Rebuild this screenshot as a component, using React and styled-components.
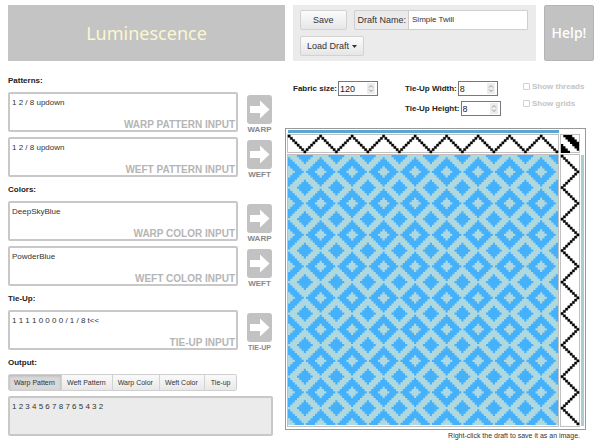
import React, { useState } from "react";
import styled, { createGlobalStyle } from "styled-components";

const GlobalStyle = createGlobalStyle`
  * { box-sizing: border-box; }
  body {
    margin: 0;
    background: #fff;
    color: #333;
    font-family: "Liberation Sans", Arial, Helvetica, sans-serif;
    font-size: 8px;
    line-height: 10px;
  }
  button, input, textarea { font: inherit; color: inherit; margin: 0; }
`;

const Page = styled.div`
  padding: 5px 6px 0 8px;
`;

const Header = styled.header`
  display: grid;
  grid-template-columns: minmax(0, 277fr) minmax(0, 243fr) 50px;
  gap: 8px;
`;

const Brand = styled.h1`
  margin: 0;
  display: flex;
  align-items: center;
  justify-content: center;
  background: #c4c4c4;
  color: #fbf7d0;
  font: 400 18px/24px "Noto Sans", "Open Sans", sans-serif;
`;

const Toolbar = styled.div`
  background: #ebebeb;
  padding: 5px 8px 5px 7px;
  display: flex;
  flex-direction: column;
  align-items: flex-start;
  gap: 6px;
`;

const ToolRow = styled.div`
  display: flex;
  align-self: stretch;
  gap: 7px;
`;

const Button = styled.button`
  height: 20px;
  padding: 0 12px;
  border: 1px solid #d2d2d2;
  border-radius: 2px;
  background: linear-gradient(#fcfcfc, #e6e6e6);
  font-size: 9px;
  line-height: 12px;
  white-space: nowrap;
`;

const DraftButton = styled(Button)`
  padding: 0 6px;
  display: flex;
  align-items: center;
  gap: 3px;
`;

const NameField = styled.label`
  flex: 1;
  min-width: 0;
  display: flex;
  height: 20px;
  border: 1px solid #cfcfcf;
  border-radius: 2px 0 0 2px;
  font-size: 9px;
  line-height: 18px;
  padding-left: 3px;
  gap: 2px;
  white-space: nowrap;
`;

const NameInput = styled.input`
  flex: 1;
  min-width: 0;
  border: 0;
  border-left: 1px solid #ccc;
  padding: 0 3px;
  background: #fff;
  font-size: 8px;
`;

const HelpButton = styled.button`
  padding: 0;
  border: 1px solid #b4b4b4;
  border-radius: 2px;
  background: #c2c2c2;
  color: #fff;
  font: 500 14px/20px "Noto Sans", "Open Sans", sans-serif;
`;

const Main = styled.main`
  display: grid;
  grid-template-columns: minmax(0, 265fr) minmax(0, 301fr);
  column-gap: 12px;
  padding-top: 15px;
  padding-right: 8px;
`;

const Column = styled.div`
  display: flex;
  flex-direction: column;
  gap: 8px;
  min-width: 0;
`;

const Section = styled.section``;

const Heading = styled.h2`
  margin: 0 0 6px;
  font-size: 8px;
  line-height: 10px;
  color: #222;
`;

const Stack = styled.div`
  display: grid;
  gap: 5px;
`;

const FieldRow = styled.div`
  display: flex;
  align-items: flex-start;
  gap: 8px;
  height: 40px;
`;

const Field = styled.label`
  position: relative;
  flex: 1;
  min-width: 0;
`;

const Area = styled.textarea`
  display: block;
  width: 100%;
  height: 40px;
  padding: 4px 2px 2px;
  border: 2px solid #c8c8c8;
  border-radius: 2px;
  background: ${(p) => (p.readOnly ? "#ebebeb" : "#fff")};
  resize: none;
  overflow: hidden;
  line-height: 10px;
`;

const Watermark = styled.span`
  position: absolute;
  right: 3px;
  bottom: 1px;
  color: #b5b5b5;
  font-size: 10px;
  line-height: 12px;
  font-weight: 700;
  pointer-events: none;
`;

const ApplyButton = styled.button`
  width: 27px;
  height: 43px;
  padding: 3px 0 0;
  border: 0;
  background: transparent;
  display: flex;
  flex-direction: column;
  align-items: center;
  color: #888;
  font-size: ${(p) => (p.$long ? 7 : 8)}px;
  line-height: 11px;
  font-weight: 700;
  white-space: nowrap;
  svg { flex: none; }
`;

const Tabs = styled.div`
  display: flex;
  width: max-content;
  height: 17px;
  margin-bottom: 5px;
  border: 1px solid #cfcfcf;
  border-radius: 2px;
  overflow: hidden;
`;

const Tab = styled.button`
  padding: 0 6px 0 5px;
  border: 0;
  border-right: 1px solid #d2d2d2;
  background: ${(p) => (p.$active ? "#d9d9d9" : "linear-gradient(#fafafa, #e8e8e8)")};
  box-shadow: ${(p) => (p.$active ? "inset 0 1px 3px #b4b4b4" : "none")};
  font-size: 7px;
  line-height: 10px;
  &:last-child { border-right: 0; padding-left: 6px; }
`;

const Options = styled.div`
  display: grid;
  grid-template-columns: 112px 118px 1fr;
  padding: 5px 0 0 8px;
  height: 52px;
`;

const OptionGroup = styled.div`
  display: flex;
  flex-direction: column;
  align-items: flex-start;
  gap: ${(p) => p.$gap || 5}px;
`;

const NumberLabel = styled.label`
  display: flex;
  align-items: center;
  gap: 1px;
  color: #222;
  font-weight: 700;
  white-space: nowrap;
`;

const NumberBox = styled.span`
  display: flex;
  align-items: center;
  width: 40px;
  height: 15px;
  border: 1px solid #777784;
  background: #fff;
  padding-right: 2px;
`;

const NumberInput = styled.input`
  flex: 1;
  min-width: 0;
  height: 13px;
  border: 0;
  padding: 0 1px;
  background: transparent;
  font-weight: 400;
  font-size: 9px;
  appearance: textfield;
  &::-webkit-inner-spin-button { appearance: none; }
`;

const CheckLabel = styled.label`
  display: flex;
  align-items: center;
  gap: 2px;
  height: 11px;
  color: #c4c4c4;
  font-weight: 700;
  white-space: nowrap;
`;

const CheckBox = styled.input`
  appearance: none;
  width: 7px;
  height: 7px;
  border: 1px solid #d0d0d0;
  border-radius: 1px;
  background: #fff;
`;

const Figure = styled.figure`
  margin: 0;
  svg { display: block; width: 100%; }
`;

const Caption = styled.figcaption`
  padding: 1px 6px 0 0;
  text-align: right;
  font-size: 7px;
  line-height: 10px;
`;

const SIZE = 120;
const SHAFTS = 8;
const WARP_BLUE = "#45b1fb";
const WEFT_BLUE = "#b0d9df";

const wave = (i) => {
  const step = i % (2 * SHAFTS - 2);
  return step < SHAFTS ? step : 2 * SHAFTS - 2 - step;
};
const tied = (row, col) => {
  const d = (col - row + SHAFTS) % SHAFTS;
  return d >= 1 && d <= 4;
};

// One closed subpath per horizontal run of filled cells.
const cells = (cols, rows, filled) => {
  let d = "";
  for (let y = 0; y < rows; y++) {
    let x = 0;
    while (x < cols) {
      const start = x;
      while (x < cols && filled(x, y)) x++;
      if (x > start) d += `M${start} ${y}h${x - start}v1h-${x - start}z`;
      else x++;
    }
  }
  return d;
};

const warpPath = cells(SIZE, SHAFTS, (x, y) => wave(x) === y);
const weftPath = cells(SHAFTS, SIZE, (x, y) => wave(y) === x);
const tiePath = cells(SHAFTS, SHAFTS, (x, y) => tied(y, x));
const clothPath = cells(SIZE, SIZE, (x, y) => tied(wave(x), wave(y)));

function Draft() {
  return (
    <svg viewBox="0 0 301 302" role="img" aria-label="Simple Twill draft">
      <rect x="0.5" y="0.5" width="300" height="301" fill="#fff" stroke="#999" />
      <rect x="3" y="2" width="271" height="3" fill="#5aa5d4" />
      <g fill="#fff" stroke="#c0c0c0">
        <rect x="2.5" y="6.5" width="271" height="18" />
        <rect x="275.5" y="6.5" width="19" height="18" />
        <rect x="275.5" y="26.5" width="19" height="272" />
        <rect x="2.5" y="26.5" width="271" height="272" />
      </g>
      <rect x="296" y="27" width="3" height="271" fill="#a9cdd2" />
      <rect x="3" y="27" width="270" height="270" fill={WEFT_BLUE} />
      <g stroke="#000" strokeWidth="0.2">
        <path d={warpPath} transform="translate(3 7) scale(2.25)" />
        <path d={weftPath} transform="translate(276 27) scale(2.25)" />
      </g>
      <path d={tiePath} transform="translate(276 7) scale(2.25)" />
      <path d={clothPath} transform="translate(3 27) scale(2.25)" fill={WARP_BLUE} />
    </svg>
  );
}

function PatternField({ label, button, value }) {
  return (
    <FieldRow>
      <Field>
        <Area defaultValue={value} spellCheck={false} />
        <Watermark>{label}</Watermark>
      </Field>
      <ApplyButton $long={button.length > 4}>
        <svg width="25" height="29" viewBox="0 0 25 29" aria-hidden="true">
          <rect width="25" height="29" rx="3" fill="#c2c2c2" />
          <path d="M3 11H13V5.500L22.500 14.500L13 23.500V18H3Z" fill="#fff" />
        </svg>
        {button}
      </ApplyButton>
    </FieldRow>
  );
}

function NumberOption({ label, value }) {
  return (
    <NumberLabel>
      {label}
      <NumberBox>
        <NumberInput type="number" defaultValue={value} />
        <svg width="8" height="11" viewBox="0 0 8 11" aria-hidden="true">
          <rect width="8" height="11" fill="#ececec" />
          <path d="M2 4.500L4 2.500L6 4.500M2 6.500L4 8.500L6 6.500" fill="none" stroke="#999" />
        </svg>
      </NumberBox>
    </NumberLabel>
  );
}

const TABS = ["Warp Pattern", "Weft Pattern", "Warp Color", "Weft Color", "Tie-up"];

export default function App() {
  const [tab, setTab] = useState(TABS[0]);
  return (
    <Page>
      <GlobalStyle />
      <Header>
        <Brand>Luminescence</Brand>
        <Toolbar>
          <ToolRow>
            <Button>Save</Button>
            <NameField>
              Draft Name:
              <NameInput defaultValue="Simple Twill" />
            </NameField>
          </ToolRow>
          <DraftButton>
            Load Draft
            <svg width="5" height="3" viewBox="0 0 5 3" aria-hidden="true">
              <path d="M0 0H5L2.500 3Z" fill="#333" />
            </svg>
          </DraftButton>
        </Toolbar>
        <HelpButton>Help!</HelpButton>
      </Header>
      <Main>
        <Column>
          <Section>
            <Heading>Patterns:</Heading>
            <Stack>
              <PatternField label="WARP PATTERN INPUT" button="WARP" value="1 2 / 8 updown" />
              <PatternField label="WEFT PATTERN INPUT" button="WEFT" value="1 2 / 8 updown" />
            </Stack>
          </Section>
          <Section>
            <Heading>Colors:</Heading>
            <Stack>
              <PatternField label="WARP COLOR INPUT" button="WARP" value="DeepSkyBlue" />
              <PatternField label="WEFT COLOR INPUT" button="WEFT" value="PowderBlue" />
            </Stack>
          </Section>
          <Section>
            <Heading>Tie-Up:</Heading>
            <PatternField label="TIE-UP INPUT" button="TIE-UP" value="1 1 1 1 0 0 0 0 / 1 / 8 t<<" />
          </Section>
          <Section>
            <Heading>Output:</Heading>
            <Tabs>
              {TABS.map((name) => (
                <Tab key={name} $active={name === tab} onClick={() => setTab(name)}>
                  {name}
                </Tab>
              ))}
            </Tabs>
            <Area readOnly aria-label="Output" value="1 2 3 4 5 6 7 8 7 6 5 4 3 2" />
          </Section>
        </Column>
        <div>
          <Options>
            <OptionGroup>
              <NumberOption label="Fabric size:" value={120} />
            </OptionGroup>
            <OptionGroup>
              <NumberOption label="Tie-Up Width:" value={8} />
              <NumberOption label="Tie-Up Height:" value={8} />
            </OptionGroup>
            <OptionGroup $gap={6}>
              <CheckLabel>
                <CheckBox type="checkbox" />
                Show threads
              </CheckLabel>
              <CheckLabel>
                <CheckBox type="checkbox" />
                Show grids
              </CheckLabel>
            </OptionGroup>
          </Options>
          <Figure>
            <Draft />
            <Caption>Right-click the draft to save it as an image.</Caption>
          </Figure>
        </div>
      </Main>
    </Page>
  );
}
